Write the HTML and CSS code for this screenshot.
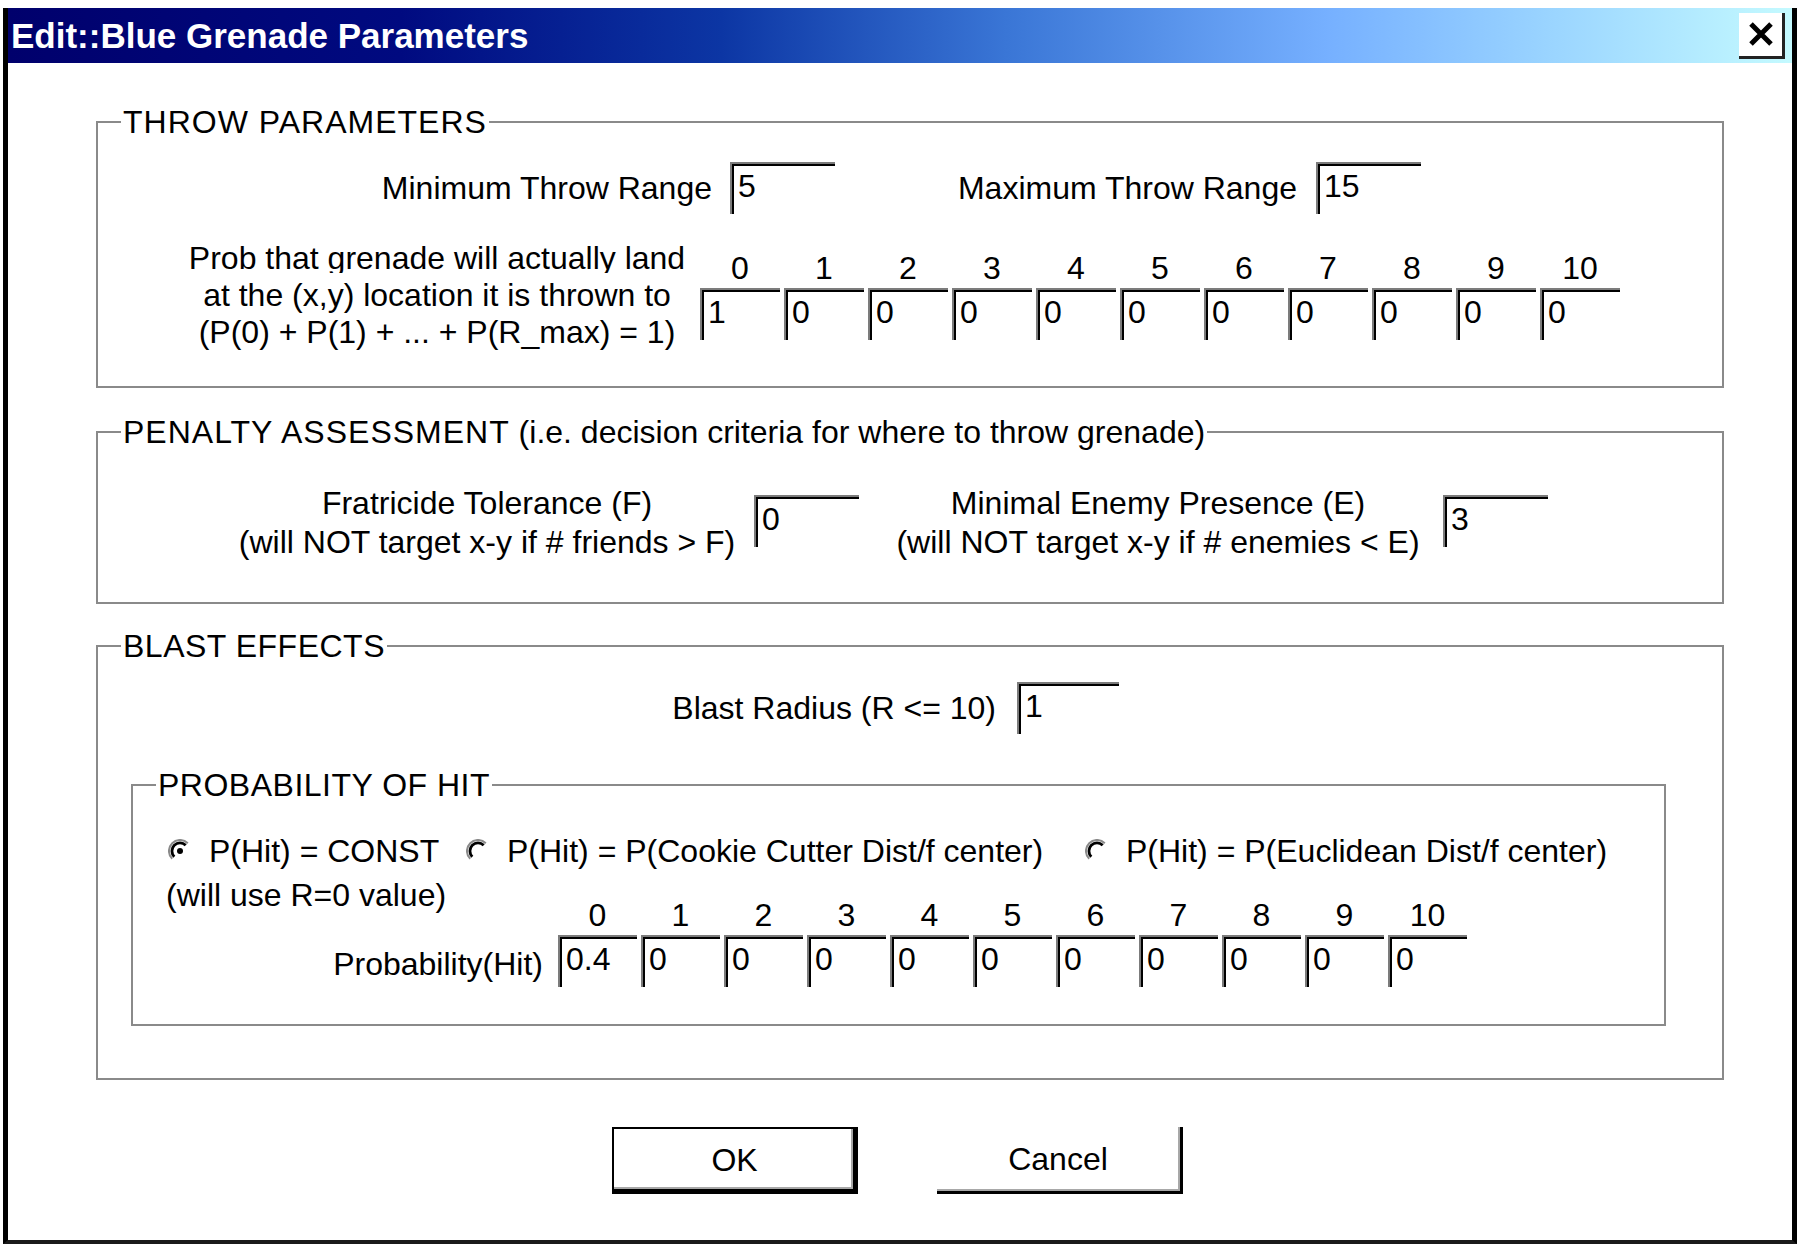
FILE: index.html
```html
<!DOCTYPE html>
<html lang="en">
<head>
    <meta charset="UTF-8">
    <title>Edit::Blue Grenade Parameters</title>
    <link rel="stylesheet" href="styles.css">
</head>
<body>
    <div class="window">
        <div class="title-bar">
            <span class="title">Edit::Blue Grenade Parameters</span>
            <button class="close-btn" type="button">
                <svg width="30" height="30" viewBox="0 0 30 30">
                    <path d="M5 5 L25 25 M25 5 L5 25" stroke="#000" stroke-width="5" fill="none"/>
                </svg>
            </button>
        </div>

        <div class="dialog">
            <!-- throw range and landing distribution -->
            <fieldset class="group group-throw">
                <legend class="caps">THROW PARAMETERS</legend>
                <div class="range-row">
                    <label class="range-label range-min">Minimum Throw Range</label>
                    <input class="field field-wide" type="text" value="5">
                    <label class="range-label range-max">Maximum Throw Range</label>
                    <input class="field field-wide" type="text" value="15">
                </div>
                <div class="land-row">
                    <div class="land-text">
                        <span class="clipped">Prob that grenade will actually land</span>
                        <span>at the (x,y) location it is thrown to</span>
                        <span>(P(0) + P(1) + ... + P(R_max) = 1)</span>
                    </div>
                    <div class="cells cells-land">
                        <span class="cell-num">0</span><span class="cell-num">1</span><span class="cell-num">2</span><span class="cell-num">3</span><span class="cell-num">4</span><span class="cell-num">5</span><span class="cell-num">6</span><span class="cell-num">7</span><span class="cell-num">8</span><span class="cell-num">9</span><span class="cell-num">10</span>
                        <input class="field" type="text" value="1">
                        <input class="field" type="text" value="0">
                        <input class="field" type="text" value="0">
                        <input class="field" type="text" value="0">
                        <input class="field" type="text" value="0">
                        <input class="field" type="text" value="0">
                        <input class="field" type="text" value="0">
                        <input class="field" type="text" value="0">
                        <input class="field" type="text" value="0">
                        <input class="field" type="text" value="0">
                        <input class="field" type="text" value="0">
                    </div>
                </div>
            </fieldset>

            <!-- targeting criteria -->
            <fieldset class="group group-penalty">
                <legend><span class="caps">PENALTY ASSESSMENT</span> (i.e. decision criteria for where to throw grenade)</legend>
                <div class="penalty-row">
                    <div class="crit crit-f">
                        <span>Fratricide Tolerance (F)</span>
                        <span>(will NOT target x-y if # friends &gt; F)</span>
                    </div>
                    <input class="field field-wide crit-input crit-input-f" type="text" value="0">
                    <div class="crit crit-e">
                        <span>Minimal Enemy Presence (E)</span>
                        <span>(will NOT target x-y if # enemies &lt; E)</span>
                    </div>
                    <input class="field field-wide crit-input crit-input-e" type="text" value="3">
                </div>
            </fieldset>

            <!-- blast radius and hit probabilities -->
            <fieldset class="group group-blast">
                <legend class="caps-narrow">BLAST EFFECTS</legend>
                <div class="blast-row">
                    <label class="blast-label">Blast Radius (R &lt;= 10)</label>
                    <input class="field blast-input" type="text" value="1">
                </div>

                <fieldset class="group group-hit">
                    <legend class="caps-narrow">PROBABILITY OF HIT</legend>
                    <div class="radio-row">
                        <label class="radio radio-const">
                            <svg class="radio-icon" width="24" height="24" viewBox="0 0 24 24">
                                <path d="M4.2 19.8 A11 11 0 0 1 19.8 4.2" stroke="#8a8a8a" stroke-width="2" fill="none"/>
                                <path d="M6.3 17.7 A8 8 0 0 1 17.7 6.3" stroke="#000" stroke-width="2.8" fill="none"/>
                                <circle cx="12" cy="12" r="3" fill="#000"/>
                            </svg>
                            P(Hit) = CONST
                        </label>
                        <label class="radio radio-cookie">
                            <svg class="radio-icon" width="24" height="24" viewBox="0 0 24 24">
                                <path d="M4.2 19.8 A11 11 0 0 1 19.8 4.2" stroke="#8a8a8a" stroke-width="2" fill="none"/>
                                <path d="M6.3 17.7 A8 8 0 0 1 17.7 6.3" stroke="#000" stroke-width="2.8" fill="none"/>
                            </svg>
                            P(Hit) = P(Cookie Cutter Dist/f center)
                        </label>
                        <label class="radio radio-euclid">
                            <svg class="radio-icon" width="24" height="24" viewBox="0 0 24 24">
                                <path d="M4.2 19.8 A11 11 0 0 1 19.8 4.2" stroke="#8a8a8a" stroke-width="2" fill="none"/>
                                <path d="M6.3 17.7 A8 8 0 0 1 17.7 6.3" stroke="#000" stroke-width="2.8" fill="none"/>
                            </svg>
                            P(Hit) = P(Euclidean Dist/f center)
                        </label>
                    </div>
                    <div class="hit-row">
                        <div class="hit-left">
                            <span class="hit-note">(will use R=0 value)</span>
                            <span class="hit-label">Probability(Hit)</span>
                        </div>
                        <div class="cells cells-hit">
                            <span class="cell-num">0</span><span class="cell-num">1</span><span class="cell-num">2</span><span class="cell-num">3</span><span class="cell-num">4</span><span class="cell-num">5</span><span class="cell-num">6</span><span class="cell-num">7</span><span class="cell-num">8</span><span class="cell-num">9</span><span class="cell-num">10</span>
                            <input class="field" type="text" value="0.4">
                            <input class="field" type="text" value="0">
                            <input class="field" type="text" value="0">
                            <input class="field" type="text" value="0">
                            <input class="field" type="text" value="0">
                            <input class="field" type="text" value="0">
                            <input class="field" type="text" value="0">
                            <input class="field" type="text" value="0">
                            <input class="field" type="text" value="0">
                            <input class="field" type="text" value="0">
                            <input class="field" type="text" value="0">
                        </div>
                    </div>
                </fieldset>
            </fieldset>

            <div class="button-row">
                <button class="btn btn-default" type="button">OK</button>
                <button class="btn" type="button">Cancel</button>
            </div>
        </div>
    </div>
</body>
</html>
```

FILE: styles.css
```css
* {
    box-sizing: border-box;
}

body {
    margin: 0;
    background: #fff;
    color: #000;
    font-family: "Liberation Sans", Arial, sans-serif;
    font-size: 32px;
}

/* outer window frame */
.window {
    margin: 8px 3px 0;
    height: 1236px;
    border-left: 5px solid #000;
    border-right: 5px solid #000;
    border-bottom: 4px solid #1a1a1a;
    background: #fff;
}

.title-bar {
    height: 55px;
    display: flex;
    align-items: center;
    justify-content: space-between;
    padding: 0 7px 0 3px;
    background: linear-gradient(to right,
        #00006c 0%, #000a80 22%, #0c36a4 40%, #3a76d6 56%,
        #76b0ff 74%, #9cd6ff 87%, #c4faff 100%);
}

.title {
    color: #fff;
    font-weight: bold;
    font-size: 35px;
}

.close-btn {
    width: 46px;
    height: 46px;
    padding: 0;
    display: flex;
    align-items: center;
    justify-content: center;
    background: #fff;
    border: none;
    border-right: 3px solid #222;
    border-bottom: 3px solid #222;
}

/* group boxes */
.group {
    margin: 0 0 0 88px;
    padding: 0;
    min-width: 0;
    width: 1628px;
    border: 2px solid #8a8a8a;
}

.group legend {
    margin-left: 23px;
    padding: 0 2px;
    line-height: 36px;
    white-space: nowrap;
}

/* capitals in the bitmap font run a little wider */
.caps {
    letter-spacing: 1px;
}

.caps-narrow {
    letter-spacing: 0.5px;
}

.group-throw {
    margin-top: 41px;
    height: 284px;
}

.group-penalty {
    margin-top: 26px;
    height: 190px;
}

.group-blast {
    margin-top: 24px;
    height: 452px;
}

.group-hit {
    margin: 33px 0 0 33px;
    width: 1535px;
    height: 259px;
}

/* sunken edit boxes */
.field {
    width: 80px;
    height: 52px;
    padding: 0 0 6px 6px;
    border: none;
    border-top: 2px solid #7c7c7c;
    border-left: 2px solid #7c7c7c;
    box-shadow: inset 2px 2px 0 #000;
    background: #fff;
    font-family: inherit;
    font-size: 32px;
    color: #000;
    outline: none;
}

.field-wide {
    width: 105px;
}

.range-row {
    display: flex;
    align-items: center;
    height: 52px;
    margin-top: 22px;
}

.range-label {
    text-align: right;
    white-space: nowrap;
}

.range-min {
    width: 614px;
    margin-right: 18px;
}

.range-max {
    width: 462px;
    margin-right: 19px;
}

.land-row {
    display: flex;
    align-items: flex-start;
    margin-top: 26px;
}

.land-text {
    display: flex;
    flex-direction: column;
    margin-left: 79px;
    width: 520px;
    text-align: center;
    line-height: 37px;
    white-space: nowrap;
}

/* first line of the static text is cut short by the control height */
.clipped {
    height: 33px;
    overflow: hidden;
    margin-bottom: 4px;
}

.cells {
    display: grid;
    column-gap: 4px;
    row-gap: 6px;
}

.cells-land {
    grid-template-columns: repeat(11, 80px);
    margin-left: 3px;
    margin-top: 14px;
}

.cells-hit {
    grid-template-columns: repeat(11, 79px);
    margin-left: 15px;
    margin-top: 24px;
}

.cell-num {
    text-align: center;
    line-height: 28px;
}

.cells .field {
    width: 100%;
}

.penalty-row {
    display: flex;
    align-items: flex-start;
    margin-top: 34px;
}

.crit {
    display: flex;
    flex-direction: column;
    text-align: center;
    line-height: 39px;
    white-space: nowrap;
}

.crit-f {
    margin-left: 139px;
    width: 500px;
}

.crit-e {
    margin-left: 34px;
    width: 530px;
}

.crit-input {
    margin-top: 11px;
}

.crit-input-f {
    margin-left: 17px;
}

.crit-input-e {
    margin-left: 20px;
}

.blast-row {
    display: flex;
    align-items: center;
    height: 52px;
    margin-top: 18px;
}

.blast-label {
    width: 898px;
    margin-right: 21px;
    text-align: right;
    white-space: nowrap;
}

.blast-input {
    width: 102px;
}

.radio-row {
    display: flex;
    align-items: center;
    height: 40px;
    margin-top: 28px;
    padding-left: 35px;
}

.radio {
    display: flex;
    align-items: center;
    white-space: nowrap;
}

.radio-icon {
    margin-right: 17px;
    flex-shrink: 0;
}

.radio-const {
    width: 298px;
}

.radio-cookie {
    width: 619px;
}

.hit-row {
    display: flex;
    margin-top: 6px;
}

.hit-left {
    display: flex;
    flex-direction: column;
    margin-left: 33px;
    width: 377px;
    line-height: 36px;
    white-space: nowrap;
}

.hit-note {
    align-self: flex-start;
}

.hit-label {
    align-self: flex-end;
    margin-top: 33px;
}

/* dialog buttons */
.button-row {
    display: flex;
    justify-content: center;
    gap: 79px;
    margin-top: 47px;
    padding-right: 6px;
}

.btn {
    width: 246px;
    height: 67px;
    padding: 0;
    background: #fff;
    border: none;
    border-right: 3px solid #000;
    border-bottom: 3px solid #000;
    box-shadow: inset -2px -2px 0 #a8a8a8;
    font-family: inherit;
    font-size: 32px;
    color: #000;
}

.btn-default {
    border: 2px solid #000;
    box-shadow: inset -3px -3px 0 #000, inset -5px -5px 0 #a8a8a8;
}
```
